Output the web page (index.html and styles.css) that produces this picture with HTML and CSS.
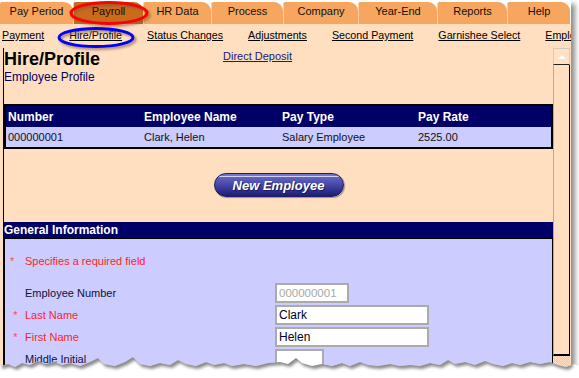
FILE: index.html
```html
<!DOCTYPE html>
<html>
<head>
<meta charset="utf-8">
<title>Hire/Profile</title>
<link rel="stylesheet" href="styles.css">
</head>
<body>
<div class="shot">
  <div class="page">
    <nav class="tabs">
      <div class="tab t1">Pay Period</div>
      <div class="tab t2 sel">Payroll</div>
      <div class="tab t3">HR Data</div>
      <div class="tab t4">Process</div>
      <div class="tab t5">Company</div>
      <div class="tab t6">Year-End</div>
      <div class="tab t7">Reports</div>
      <div class="tab t8">Help</div>
    </nav>
    <nav class="subnav">
      <a href="#">Payment</a>
      <a href="#">Hire/Profile</a>
      <a href="#">Status Changes</a>
      <a href="#">Adjustments</a>
      <a href="#">Second Payment</a>
      <a href="#">Garnishee Select</a>
      <a href="#">Emplo</a>
    </nav>
    <div class="frame">
      <main class="main">
        <div class="head">
          <div class="titles">
            <h1 class="title">Hire/Profile</h1>
            <div class="subtitle">Employee Profile</div>
          </div>
          <a class="dd" href="#">Direct Deposit</a>
        </div>
        <table class="emp">
          <thead>
            <tr><th class="c1">Number</th><th class="c2">Employee Name</th><th class="c3">Pay Type</th><th class="c4">Pay Rate</th></tr>
          </thead>
          <tbody>
            <tr><td>000000001</td><td>Clark, Helen</td><td>Salary Employee</td><td>2525.00</td></tr>
          </tbody>
        </table>
        <div class="btnrow"><button class="newemp" type="button">New Employee</button></div>
        <section class="gen">
          <div class="gen-h">General Information</div>
          <div class="gen-b">
            <div class="note"><span class="ast">*</span><span>Specifies a required field</span></div>
            <div class="form">
              <div class="row"><span></span><label>Employee Number</label><input class="in w74 dis" value="000000001" disabled></div>
              <div class="row req"><span class="ast2">*</span><label>Last Name</label><input class="in w154" value="Clark"></div>
              <div class="row req"><span class="ast2">*</span><label>First Name</label><input class="in w154" value="Helen"></div>
              <div class="row"><span></span><label>Middle Initial</label><input class="in w49" value=""></div>
            </div>
          </div>
        </section>
      </main>
      <div class="scroll">
        <div class="sb-up"><span class="tri"></span></div>
        <div class="sb-thumb"></div>
        <div class="sb-corner"></div>
      </div>
    </div>
  </div>

  <svg class="ann" width="579" height="60" viewBox="0 0 579 60">
    <defs>
      <filter id="blur1" x="-20%" y="-50%" width="140%" height="200%"><feGaussianBlur stdDeviation="1.2"/></filter>
    </defs>
    <ellipse cx="111" cy="15" rx="38" ry="10.5" fill="none" stroke="#7a5a40" stroke-opacity="0.55" stroke-width="3.5" filter="url(#blur1)"/>
    <ellipse cx="109" cy="13" rx="38" ry="10.5" fill="none" stroke="#ff0000" stroke-width="3"/>
    <ellipse cx="98" cy="39.5" rx="37" ry="9" fill="none" stroke="#7a5a40" stroke-opacity="0.55" stroke-width="3.5" filter="url(#blur1)"/>
    <ellipse cx="96" cy="37.5" rx="37" ry="9" fill="none" stroke="#0000ff" stroke-width="3"/>
  </svg>

  <svg class="torn" width="579" height="378" viewBox="0 0 579 378">
    <defs>
      <clipPath id="below">
        <path d="M0,366 L8,364 L15,367 L22,363 L30,365 L38,361 L45,364 L55,362 L62,365 L70,363 L80,366 L90,362 L98,358 L104,364 L115,366 L125,362 L133,357 L140,364 L150,366 L160,363 L170,365 L178,360 L186,364 L196,366 L206,362 L214,365 L224,363 L232,366 L244,364 L256,366 L268,363 L280,362 L288,364 L296,358 L302,363 L312,366 L322,364 L332,366 L342,363 L350,366 L360,362 L368,365 L378,366 L390,364 L400,366 L410,365 L420,366 L430,363 L440,365 L448,360 L455,364 L465,362 L475,365 L485,361 L493,364 L503,366 L512,363 L520,365 L530,362 L540,364 L550,362 L558,365 L566,367 L574,364 L579,366 L579,378 L0,378 Z"/>
      </clipPath>
      <filter id="blur2" x="-5%" y="-5%" width="110%" height="110%"><feGaussianBlur stdDeviation="1.6"/></filter>
    </defs>
    <path fill="#ffffff" d="M0,366 L8,364 L15,367 L22,363 L30,365 L38,361 L45,364 L55,362 L62,365 L70,363 L80,366 L90,362 L98,358 L104,364 L115,366 L125,362 L133,357 L140,364 L150,366 L160,363 L170,365 L178,360 L186,364 L196,366 L206,362 L214,365 L224,363 L232,366 L244,364 L256,366 L268,363 L280,362 L288,364 L296,358 L302,363 L312,366 L322,364 L332,366 L342,363 L350,366 L360,362 L368,365 L378,366 L390,364 L400,366 L410,365 L420,366 L430,363 L440,365 L448,360 L455,364 L465,362 L475,365 L485,361 L493,364 L503,366 L512,363 L520,365 L530,362 L540,364 L550,362 L558,365 L566,367 L574,364 L579,366 L579,378 L0,378 Z"/>
    <g clip-path="url(#below)">
      <path fill="#6e6e6e" fill-opacity="0.8" filter="url(#blur2)" transform="translate(2,3)" d="M0,300 L571,300 L571,364 L566,367 L558,365 L550,362 L540,364 L530,362 L520,365 L512,363 L503,366 L493,364 L485,361 L475,365 L465,362 L455,364 L448,360 L440,365 L430,363 L420,366 L410,365 L400,366 L390,364 L378,366 L368,365 L360,362 L350,366 L342,363 L332,366 L322,364 L312,366 L302,363 L296,358 L288,364 L280,362 L268,363 L256,366 L244,364 L232,366 L224,363 L214,365 L206,362 L196,366 L186,364 L178,360 L170,365 L160,363 L150,366 L140,364 L133,357 L125,362 L115,366 L104,364 L98,358 L90,362 L80,366 L70,363 L62,365 L55,362 L45,364 L38,361 L30,365 L22,363 L15,367 L8,364 L0,366 Z"/>
    </g>
  </svg>
</div>
</body>
</html>
```

FILE: styles.css
```css
* { box-sizing: border-box; }
html, body { margin: 0; padding: 0; background: #ffffff; }
body { font-family: "Liberation Sans", Arial, sans-serif; color: #000; }

.shot {
  position: relative;
  width: 579px;
  height: 378px;
  overflow: hidden;
  background: #ffffff;
}

.page {
  width: 571px;
  height: 378px;
  background: #ffdfbf;
  box-shadow: 4px 4px 5px rgba(0, 0, 0, 0.45);
  display: flex;
  flex-direction: column;
  overflow: hidden;
}

/* Tabs */
.tabs {
  display: flex;
  height: 24px;
  background: #ffffff;
  flex: none;
}
.tab {
  margin-top: 2px;
  height: 22px;
  line-height: 18px;
  font-size: 11px;
  text-align: center;
  background: #f6a65e;
  color: #111;
  border-left: 1px solid #fbcf9f;
  border-radius: 2px 9px 0 0;
  white-space: nowrap;
}
.tab.t1 { width: 73px; border-left: none; }
.tab.t2 { width: 70px; }
.tab.t3 { width: 68px; }
.tab.t4 { width: 72px; }
.tab.t5 { width: 75px; }
.tab.t6 { width: 79px; }
.tab.t7 { width: 70px; }
.tab.t8 { width: 63px; }
.tab.sel { background: #cc6a1c; color: #1a0a00; }

/* Sub navigation */
.subnav {
  height: 24px;
  flex: none;
  display: flex;
  gap: 25px;
  padding: 4px 0 0 2px;
  white-space: nowrap;
  overflow: hidden;
  background: #ffdfbf;
}
.subnav a {
  font-size: 10.7px;
  line-height: 14px;
  color: #000;
  text-decoration: underline;
  flex: none;
}

/* Frame */
.frame {
  flex: 1;
  display: flex;
  margin-left: 3px;
  border-left: 1px solid #000;
  min-height: 0;
}
.main {
  width: 549px;
  flex: none;
  overflow: hidden;
  padding-top: 1px;
}

.head {
  display: grid;
  grid-template-columns: 219px auto;
  align-items: start;
}
.title {
  margin: 0;
  font-size: 18px;
  line-height: 20px;
  font-weight: bold;
  color: #000;
}
.subtitle {
  margin-top: 1px;
  font-size: 12px;
  line-height: 14px;
  color: #000066;
}
.dd {
  font-size: 11px;
  line-height: 14px;
  color: #1a1a80;
  text-decoration: underline;
  justify-self: start;
}

/* Employee table */
.emp {
  margin-top: 20px;
  width: 549px;
  border: 2px solid #000;
  border-spacing: 0;
  table-layout: fixed;
}
.emp th {
  background: #000066;
  color: #fff;
  font-size: 12px;
  font-weight: bold;
  text-align: left;
  height: 21px;
  padding: 0 2px;
}
.emp td {
  background: #ccccff;
  font-size: 11px;
  height: 20px;
  padding: 0 2px;
  color: #111;
}
.emp .c1 { width: 136px; }
.emp .c2 { width: 138px; }
.emp .c3 { width: 136px; }

/* Button */
.btnrow {
  display: flex;
  justify-content: center;
  margin-top: 24px;
}
.newemp {
  width: 130px;
  height: 24px;
  border-radius: 12px;
  border: 1px solid #1c1c6a;
  background: linear-gradient(to bottom, #7474c8 0px, #7474c8 2px, #d0d0f4 2px, #d0d0f4 3px, #6464c0 3px, #4646a8 50%, #2c2c8c 80%, #1e1e70 100%);
  color: #fff;
  font-family: "Liberation Sans", Arial, sans-serif;
  font-size: 13px;
  font-weight: bold;
  font-style: italic;
  text-shadow: 1px 1px 0 #1a1a55;
  padding: 0;
  box-shadow: 1px 1px 1px rgba(0, 0, 40, 0.35);
}

/* General information */
.gen {
  margin-top: 25px;
}
.gen-h {
  background: #000066;
  color: #fff;
  font-size: 12px;
  font-weight: bold;
  line-height: 17px;
  height: 16px;
  padding-left: 0;
}
.gen-b {
  background: #ccccff;
  border: 1px solid #000;
  border-bottom: none;
  padding-top: 15px;
  height: 200px;
}
.note {
  display: grid;
  grid-template-columns: 20px auto;
  font-size: 11px;
  line-height: 14px;
  color: #ff2424;
}
.note .ast { padding-left: 5px; color: #ff4a4a; }

.form {
  margin-top: 14px;
}
.row {
  display: grid;
  grid-template-columns: 20px 250px auto;
  height: 22px;
  align-items: center;
}
.row label {
  font-size: 11px;
  color: #10103a;
}
.row.req label { color: #ff2424; }
.ast2 {
  font-size: 11px;
  color: #ff4a4a;
  text-align: center;
  padding-left: 1px;
}
.in {
  height: 20px;
  border: 2px solid #ababab;
  background: #fff;
  font-family: "Liberation Sans", Arial, sans-serif;
  font-size: 12px;
  color: #000022;
  padding: 0 2px;
  margin: 0;
}
.in.dis { color: #a8a8a8; font-size: 11.5px; background: #fff; }
.w74 { width: 74px; }
.w154 { width: 154px; }
.w49 { width: 49px; }

/* Scrollbar */
.scroll {
  width: 17px;
  flex: none;
  display: flex;
  flex-direction: column;
  background: #ffdfbf;
}
.sb-up {
  height: 17px;
  border: 1px solid #d8c8b8;
  border-bottom: 1px solid #222;
  display: flex;
  align-items: center;
  justify-content: center;
  background: #ffe2c6;
}
.tri {
  width: 0;
  height: 0;
  border-left: 4px solid transparent;
  border-right: 4px solid transparent;
  border-bottom: 4px solid #ffffff;
}
.sb-thumb {
  flex: 1;
  border-left: 1px solid #b8a898;
  border-right: 1px solid #000;
  border-bottom: 2px solid #000;
  background: #ffdfbf;
}
.sb-corner {
  height: 22px;
  background: repeating-conic-gradient(#ffdfbf 0 25%, #f0c8a8 0 50%) 0 0 / 2px 2px;
}

/* Overlays */
.ann {
  position: absolute;
  left: 0;
  top: 0;
  pointer-events: none;
}
.torn {
  position: absolute;
  left: 0;
  top: 0;
  pointer-events: none;
}
```
